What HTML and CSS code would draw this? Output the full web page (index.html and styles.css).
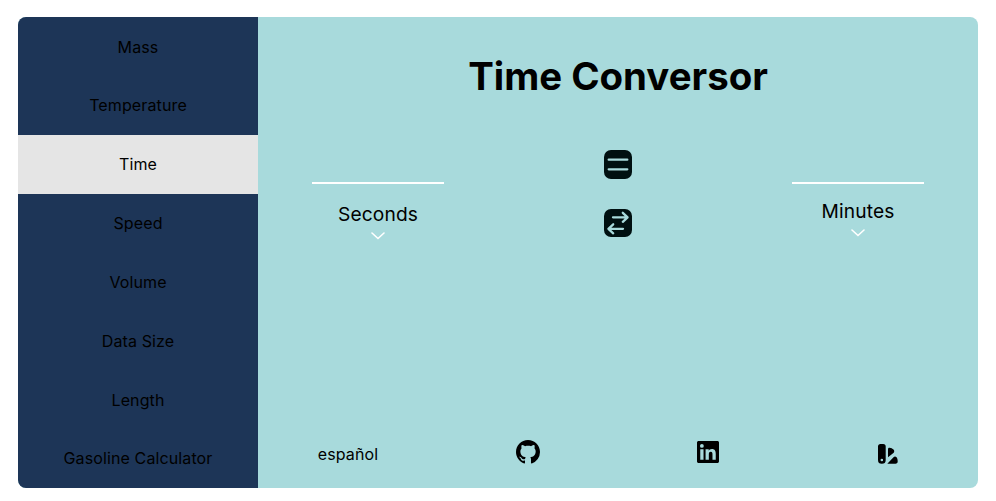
FILE: index.html
```html
<!DOCTYPE html>
<html lang="en">
<head>
<meta charset="utf-8">
<title>Time Conversor</title>
<link rel="stylesheet" href="styles.css">
</head>
<body>
<div class="card">
  <nav class="menu">
    <a class="item first">Mass</a>
    <a class="item">Temperature</a>
    <a class="item active">Time</a>
    <a class="item">Speed</a>
    <a class="item">Volume</a>
    <a class="item">Data Size</a>
    <a class="item">Length</a>
    <a class="item last">Gasoline Calculator</a>
  </nav>
  <main class="main">
    <h1 class="title">Time Conversor</h1>
    <section class="converter">
      <div class="unit from">
        <div class="field"></div>
        <span class="name">Seconds</span>
        <svg class="chevron" width="14" height="8" viewBox="0 0 14 8"><path d="M1 1l6 5.500L13 1"/></svg>
      </div>
      <div class="actions">
        <svg width="28" height="29" viewBox="0 0 28 29"><rect width="28" height="29" rx="7"/><path class="cut" d="M4.700 9.700h18.600M4.700 19.300h18.600"/></svg>
        <svg width="28" height="28" viewBox="0 0 28 28"><rect width="28" height="28" rx="7"/><path class="cut" d="M9 8.300h14.500M18.800 3.800l4.800 4.500-4.800 4.500M19 19.800H4.500M9.200 15.300l-4.800 4.500 4.800 4.500"/></svg>
      </div>
      <div class="unit to">
        <div class="field"></div>
        <span class="name">Minutes</span>
        <svg class="chevron" width="14" height="8" viewBox="0 0 14 8"><path d="M1 1l6 5.500L13 1"/></svg>
      </div>
    </section>
    <footer class="footer">
      <span class="language">español</span>
      <svg width="24" height="24" viewBox="0 0 16 16"><path d="M8 0C3.58 0 0 3.58 0 8c0 3.54 2.29 6.53 5.47 7.59.4.07.55-.17.55-.38 0-.19-.01-.82-.01-1.49-2.01.37-2.53-.49-2.69-.94-.09-.23-.48-.94-.82-1.13-.28-.15-.68-.52-.01-.53.63-.01 1.08.58 1.23.82.72 1.21 1.87.87 2.33.66.07-.52.28-.87.51-1.07-1.78-.2-3.64-.89-3.64-3.95 0-.87.31-1.59.82-2.15-.08-.2-.36-1.02.08-2.12 0 0 .67-.21 2.2.82.64-.18 1.32-.27 2-.27s1.36.09 2 .27c1.53-1.04 2.2-.82 2.2-.82.44 1.1.16 1.92.08 2.12.51.56.82 1.27.82 2.15 0 3.07-1.87 3.75-3.65 3.95.29.25.54.73.54 1.48 0 1.07-.01 1.93-.01 2.2 0 .21.15.46.55.38A8.01 8.01 0 0 0 16 8c0-4.42-3.58-8-8-8z"/></svg>
      <svg width="22" height="22" viewBox="0 0 24 24"><path d="M22.22 0H1.77C.79 0 0 .77 0 1.73v20.54C0 23.23.79 24 1.77 24h20.45c.98 0 1.78-.77 1.78-1.73V1.73C24 .77 23.2 0 22.22 0zM7.12 20.45H3.56V9h3.56zM5.34 7.43a2.06 2.06 0 1 1 0-4.13 2.06 2.06 0 0 1 0 4.13zM20.45 20.45h-3.56v-5.57c0-1.33-.03-3.04-1.85-3.04-1.85 0-2.14 1.45-2.14 2.94v5.67H9.35V9h3.41v1.56h.05c.48-.9 1.64-1.85 3.37-1.85 3.6 0 4.27 2.37 4.27 5.46z"/></svg>
      <svg class="swatches" width="20" height="20" viewBox="0 0 20 20"><path fill-rule="evenodd" d="M2.500 0h2.700a2.500 2.500 0 0 1 2.500 2.500V16a3.850 3.850 0 0 1-7.700 0V2.500A2.500 2.500 0 0 1 2.500 0zM3.850 14.700a1.300 1.300 0 1 0 0 2.600 1.300 1.300 0 0 0 0-2.600z"/><path d="M10 13.300V5.200c0-1.100.6-1.600 1.600-1.500 1.500.1 2.900.8 3.900 1.900.9 1 1 2.100.2 3.200zM9.300 19.700l6.200-6.500c.9-.9 2-1 2.800-.1.900 1 1.400 2.500 1.400 4.400 0 1.400-.8 2.200-2.200 2.200z"/></svg>
    </footer>
  </main>
</div>
</body>
</html>
```
FILE: styles.css
```css
body {
  margin: 0;
  padding: 17px 18px 13px;
  background: #fff;
  color: #000;
  font: 16px/24px Inter, sans-serif;
  letter-spacing: 0.12px;
}
.card {
  display: flex;
  height: 471px;
  border-radius: 8px;
  overflow: hidden;
  background: #a8dadc;
}
.menu {
  display: flex;
  flex-direction: column;
  width: 240px;
  background: #1d3557;
}
.item {
  height: 12.5%;
  display: flex;
  align-items: center;
  justify-content: center;
  box-sizing: border-box;
}
.first { padding-top: 1px; }
.last { padding-bottom: 1px; }
.active { background: #e5e5e5; }
.main {
  flex: 1;
  display: flex;
  flex-direction: column;
}
.title {
  height: 118px;
  margin: 0;
  text-align: center;
  font-size: 38.4px;
  line-height: 119px;
  font-weight: 700;
  letter-spacing: 0;
}
.converter {
  display: grid;
  grid-template-columns: repeat(3, 1fr);
  flex: 1;
}
.unit, .actions {
  display: flex;
  flex-direction: column;
  align-items: center;
}
.field {
  width: 132px;
  height: 47px;
  border-bottom: 2px solid #fff;
}
.name {
  margin-top: 18px;
  font-size: 19.2px;
  line-height: 24px;
}
.to .name { margin-top: 15px; }
.chevron {
  margin-top: 6px;
  fill: none;
  stroke: #fff;
  stroke-width: 1.6;
  stroke-linecap: round;
}
.actions {
  padding-top: 15px;
  gap: 30px;
  fill: #001011;
}
.cut {
  fill: none;
  stroke: #a8dadc;
  stroke-width: 2.3;
  stroke-linecap: round;
  stroke-linejoin: round;
}
.footer {
  display: grid;
  grid-template-columns: repeat(4, 1fr);
  align-items: center;
  justify-items: center;
  height: 72px;
}
.language { padding-top: 3px; }
.swatches { margin-top: 4px; }
```
